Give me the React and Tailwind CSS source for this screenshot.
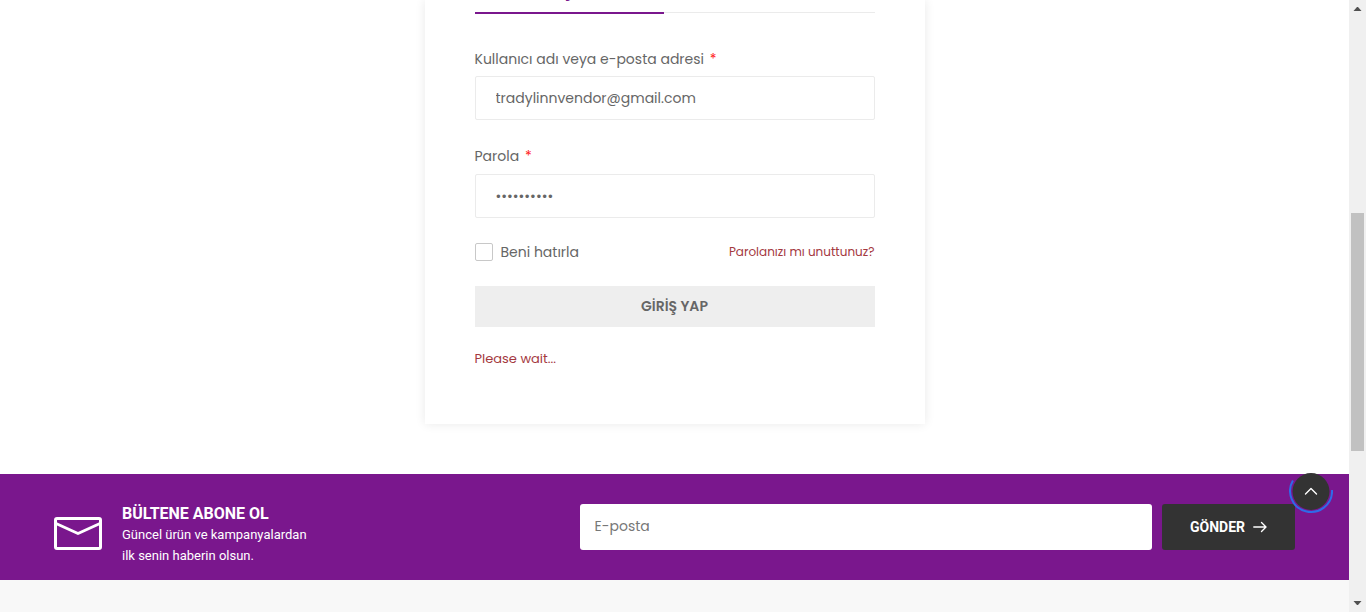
import React from "react";

function LoginCard() {
  return (
    <section className="w-full max-w-[500px] bg-white px-[50px] pb-[53px] shadow-[0_0_10px_rgba(0,0,0,0.09)]">
      <div className="flex h-3.5 items-end overflow-hidden text-sm font-semibold text-[#7a178d]">
        <button type="button" className="w-[189px] border-b-2 border-[#7a178d] pb-2.5 leading-5">
          GİRİŞ YAP
        </button>
        <span className="mb-px flex-1 border-b border-[#ebebeb]" />
      </div>

      <form className="pt-[33px]" onSubmit={(e) => e.preventDefault()}>
        <label htmlFor="user" className="block text-sm leading-6">
          Kullanıcı adı veya e-posta adresi <span className="ml-0.5 text-[#ff2020]">*</span>
        </label>
        <input
          id="user"
          type="text"
          defaultValue="tradylinnvendor@gmail.com"
          className="mt-[5px] block h-11 w-full rounded-xs border border-[#ebebeb] bg-white px-5 text-sm outline-none"
        />

        <label htmlFor="password" className="mt-6 block text-sm leading-6">
          Parola <span className="ml-0.5 text-[#ff2020]">*</span>
        </label>
        <input
          id="password"
          type="password"
          defaultValue="0123456789"
          className="mt-1.5 block h-11 w-full rounded-xs border border-[#ebebeb] bg-white px-5 text-sm outline-none"
        />

        <div className="mt-[22px] flex items-center justify-between">
          <label className="flex items-center gap-2 text-sm leading-6">
            <input
              type="checkbox"
              className="size-[18px] appearance-none rounded-xs border border-[#c8c8c8] bg-white"
            />
            Beni hatırla
          </label>
          <a href="#lost-password" className="text-xs leading-6 text-[#a4393f]">
            Parolanızı mı unuttunuz?
          </a>
        </div>

        <button
          type="submit"
          className="mt-[22px] block w-full bg-[#eeeeee] text-sm leading-[41px] font-semibold text-[#666]"
        >
          GİRİŞ YAP
        </button>
        <p className="mt-5 text-[13px] leading-6 text-[#a4393f]">Please wait...</p>
      </form>
    </section>
  );
}

function Newsletter() {
  return (
    <section className="relative flex items-start justify-between bg-[#7a178d] px-[54px] py-[30px] font-['Roboto',sans-serif] text-white">
      <div className="flex h-[46px] items-start gap-5">
        <svg
          className="mt-3 h-[34px] w-12 shrink-0"
          viewBox="0 0 48 34"
          fill="none"
          stroke="currentColor"
          strokeWidth="3"
          strokeLinejoin="round"
        >
          <rect x="1.5" y="2.5" width="45" height="30" rx="1.5" />
          <path d="M2 7.5 24 17.5l22-10" />
        </svg>
        <div className="-mt-px">
          <h2 className="text-base leading-[21px] font-bold">BÜLTENE ABONE OL</h2>
          <p className="text-[13px] leading-[21px]">
            Güncel ürün ve kampanyalardan
            <br />
            ilk senin haberin olsun.
          </p>
        </div>
      </div>

      <form className="flex w-[57.65%] gap-2.5" onSubmit={(e) => e.preventDefault()}>
        <input
          type="email"
          aria-label="E-posta"
          placeholder="E-posta"
          className="h-[46px] min-w-0 flex-1 rounded-[3px] bg-white px-[15px] pb-0.5 font-['Poppins','Inter',sans-serif] text-sm text-[#666] outline-none placeholder:text-[#777]"
        />
        <button
          type="submit"
          className="flex h-[46px] w-[133px] items-center justify-center gap-2 rounded-[3px] bg-[#333] text-sm font-bold"
        >
          GÖNDER
          <svg className="h-3 w-3.5" viewBox="0 0 14 12" fill="none" stroke="currentColor" strokeWidth="1.4" strokeLinecap="round" strokeLinejoin="round">
            <path d="M.8 6h12M8.5 1.5 13 6l-4.5 4.500" />
          </svg>
        </button>
      </form>

      <button type="button" aria-label="Yukarı" className="absolute -top-1 right-4 size-11">
        <svg viewBox="0 0 44 44" className="size-11" fill="none">
          <circle cx="22" cy="21.5" r="18.5" fill="#333" />
          <path d="M43 20a21 21 0 0 1 .1 1A21 21 0 1 1 3.900 10.500" stroke="#2f6be8" strokeWidth="2" />
          <path d="m16.500 24 5.500-5.500 5.500 5.500" stroke="#fff" strokeWidth="1.400" strokeLinecap="round" strokeLinejoin="round" />
        </svg>
      </button>
    </section>
  );
}

function Scrollbar() {
  return (
    <aside aria-hidden="true" className="flex w-[17px] shrink-0 flex-col items-center bg-[#f0f0f0]">
      <svg className="h-[17px] w-[17px]" viewBox="0 0 17 17">
        <path d="M8 7h1l3.5 4h-8z" fill="#505050" />
      </svg>
      <div className="flex w-[13px] flex-1 flex-col">
        <div className="flex-[196]" />
        <div className="flex-[238] bg-[#c1c1c1]" />
        <div className="flex-[144]" />
      </div>
      <svg className="h-[17px] w-[17px]" viewBox="0 0 17 17">
        <path d="M4.5 6h8l-3.5 4h-1z" fill="#505050" />
      </svg>
    </aside>
  );
}

export default function App() {
  return (
    <div className="flex min-h-screen bg-white font-['Poppins','Inter',sans-serif] text-[#666]">
      <div className="flex min-w-0 flex-1 flex-col">
        <main className="flex justify-center pb-[50px]">
          <LoginCard />
        </main>
        <Newsletter />
        <footer className="flex-1 bg-[#f8f8f8]" />
      </div>
      <Scrollbar />
    </div>
  );
}
